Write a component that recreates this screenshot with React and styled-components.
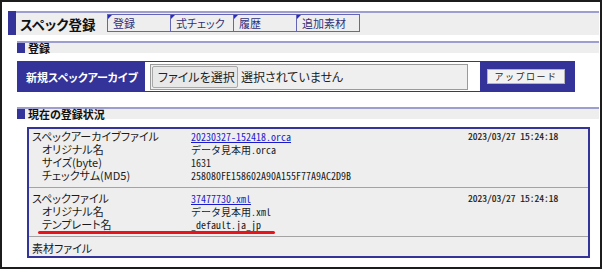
import React from 'react';
import styled, { createGlobalStyle } from 'styled-components';

const NAVY = '#333399';
const LAVENDER = '#9d9dcf';
const PANEL = '#eeeeee';

const GlobalStyle = createGlobalStyle`
  html, body {
    margin: 0;
    padding: 0;
    background: #fff;
  }
  body {
    font-family: "Noto Sans CJK JP", "Noto Sans", sans-serif;
    font-feature-settings: "palt";
    color: #1a1a1a;
    white-space: nowrap;
  }
`

const Frame = styled.div`
  width: 602px;
  height: 269px;
  box-sizing: border-box;
  border: 2px solid #1c1c1c;
  padding: 9px 1px 0 6px;
  overflow: hidden;
`

const TitleBar = styled.div`
  display: flex;
  height: 24px;
  box-sizing: border-box;
  border-top: 2px solid ${LAVENDER};
  background: ${PANEL};
`

const TitleMark = styled.div`
  width: 8px;
  margin-top: -2px;
  background: ${NAVY};
`

const Title = styled.h1`
  margin: 0 0 0 4px;
  width: 87px;
  font-size: 13.5px;
  font-weight: bold;
  line-height: 22px;
  color: #111;
`

const Tabs = styled.nav`
  display: flex;
  margin-top: 1px;
  height: 18px;
`

const Tab = styled.a`
  position: relative;
  display: block;
  width: 64px;
  height: 18px;
  box-sizing: border-box;
  margin-left: -1px;
  padding-left: 5px;
  border: 1px solid #6565b5;
  font-size: 11px;
  line-height: 16px;
  color: #30307a;
  text-decoration: none;

  &:first-child {
    margin-left: 0;
  }

  &::before {
    content: '';
    position: absolute;
    top: 0;
    left: 0;
    border-top: 4px solid #2a2ad0;
    border-right: 4px solid transparent;
  }
`

const Section = styled.section`
  margin: ${p => p.$top}px 0 0 9px;
`

const SectionHeader = styled.div`
  display: flex;
  height: 12px;
  box-sizing: border-box;
  border-top: 2px solid ${LAVENDER};
  background: ${PANEL};
`

const SectionMark = styled.div`
  flex: none;
  width: 8px;
  background: ${NAVY};
`

const SectionTitle = styled.h2`
  margin: 0 0 0 3px;
  font-size: 11px;
  font-weight: bold;
  line-height: 10px;
  color: #111;
`

const UploadBar = styled.div`
  display: flex;
  width: 558px;
  height: 31px;
  margin-top: 8px;
  box-sizing: border-box;
  border: 1px solid ${NAVY};
`

const LabelCell = styled.div`
  display: flex;
  align-items: center;
  width: 127px;
  padding-left: 8px;
  box-sizing: border-box;
  background: ${NAVY};
  color: #fff;
  font-size: 11px;
  font-weight: bold;
  line-height: 14px;
`

const FileCell = styled.div`
  display: flex;
  align-items: center;
  width: 335px;
  padding-left: 5px;
  box-sizing: border-box;
  background: #fff;
`

const FileBox = styled.div`
  display: flex;
  align-items: center;
  width: 318px;
  height: 26px;
  box-sizing: border-box;
  padding-left: 1px;
  border: 1px solid #9a9a9a;
  background: #efefef;
  font-size: 12px;
  line-height: 16px;
`

const PickButton = styled.span`
  display: flex;
  align-items: center;
  width: 86px;
  height: 22px;
  box-sizing: border-box;
  padding-left: 5px;
  border: 1px solid #a8a8a8;
  border-radius: 2px;
  background: #e8e8e8;
  color: #222;
`

const NoFile = styled.span`
  margin-left: 3px;
  color: #222;
`

const UploadCell = styled.div`
  display: flex;
  align-items: center;
  flex: 1;
  padding-left: 7px;
  background: ${NAVY};
`

const UploadButton = styled.button`
  width: 78px;
  height: 15px;
  padding: 0;
  border: 1px solid #b5b5b5;
  background: #f2f2f2;
  font-family: "Noto Sans CJK JP", sans-serif;
  font-size: 9px;
  letter-spacing: 1.5px;
  line-height: 13px;
  color: #222;
`

const InfoBox = styled.div`
  position: relative;
  width: 563px;
  margin: 8px 0 0 10px;
  box-sizing: border-box;
  border: 2px solid ${NAVY};
  background: ${PANEL};
`

const Group = styled.div`
  padding: ${p => p.$pad};
  border-bottom: ${p => (p.$last ? 'none' : '1px solid #a3a3a3')};
`

const Row = styled.div`
  display: grid;
  grid-template-columns: 159px 277px auto;
  height: 13px;
  padding-left: 3px;
  font-size: 11px;
  line-height: 13px;
`

const Label = styled.span`
  padding-left: ${p => (p.$sub ? 10 : 0)}px;
  color: #1a1a1a;
`

const Value = styled.span`
  font-family: "Noto Sans Mono CJK JP", "Liberation Mono", monospace;
  font-feature-settings: normal;
  font-size: 10px;
  color: #1a1a1a;
`

const FileLink = styled(Value).attrs({ as: 'a', href: '#' })`
  color: #1a1acc;
  text-decoration: underline;
`

const Stamp = styled(Value)`
  font-size: 9.5px;
  color: #1a1a1a;
  -webkit-text-stroke: 0.2px #1a1a1a;
`

const Marker = styled.div`
  position: absolute;
  left: 9px;
  top: 102px;
  width: 237px;
  height: 3px;
  border-radius: 2px;
  background: #e8141c;
`

const tabs = ['登録', '式チェック', '履歴', '追加素材'];

const App = () => (
  <>
    <GlobalStyle />
    <Frame>
      <TitleBar>
        <TitleMark />
        <Title>スペック登録</Title>
        <Tabs>
          {tabs.map(t => <Tab key={t} href="#">{t}</Tab>)}
        </Tabs>
      </TitleBar>

      <Section $top={6}>
        <SectionHeader>
          <SectionMark />
          <SectionTitle>登録</SectionTitle>
        </SectionHeader>
        <UploadBar>
          <LabelCell>新規スペックアーカイブ</LabelCell>
          <FileCell>
            <FileBox>
              <PickButton>ファイルを選択</PickButton>
              <NoFile>選択されていません</NoFile>
            </FileBox>
          </FileCell>
          <UploadCell>
            <UploadButton>アップロード</UploadButton>
          </UploadCell>
        </UploadBar>
      </Section>

      <Section $top={15}>
        <SectionHeader>
          <SectionMark />
          <SectionTitle>現在の登録状況</SectionTitle>
        </SectionHeader>
        <InfoBox>
          <Group $pad="1px 0 5px">
            <Row>
              <Label>スペックアーカイブファイル</Label>
              <span><FileLink>20230327-152418.orca</FileLink></span>
              <Stamp>2023/03/27 15:24:18</Stamp>
            </Row>
            <Row>
              <Label $sub>オリジナル名</Label>
              <Value>データ見本用.orca</Value>
              <span />
            </Row>
            <Row>
              <Label $sub>サイズ(byte)</Label>
              <Value>1631</Value>
              <span />
            </Row>
            <Row>
              <Label $sub>チェックサム(MD5)</Label>
              <Value>258080FE158602A90A155F77A9AC2D9B</Value>
              <span />
            </Row>
          </Group>
          <Group $pad="4px 0 5px">
            <Row>
              <Label>スペックファイル</Label>
              <span><FileLink>37477730.xml</FileLink></span>
              <Stamp>2023/03/27 15:24:18</Stamp>
            </Row>
            <Row>
              <Label $sub>オリジナル名</Label>
              <Value>データ見本用.xml</Value>
              <span />
            </Row>
            <Row>
              <Label $sub>テンプレート名</Label>
              <Value>_default.ja_jp</Value>
              <span />
            </Row>
          </Group>
          <Group $pad="5px 0 1px" $last>
            <Row>
              <Label>素材ファイル</Label>
              <span />
              <span />
            </Row>
          </Group>
          <Marker />
        </InfoBox>
      </Section>
    </Frame>
  </>
);

export default App;
